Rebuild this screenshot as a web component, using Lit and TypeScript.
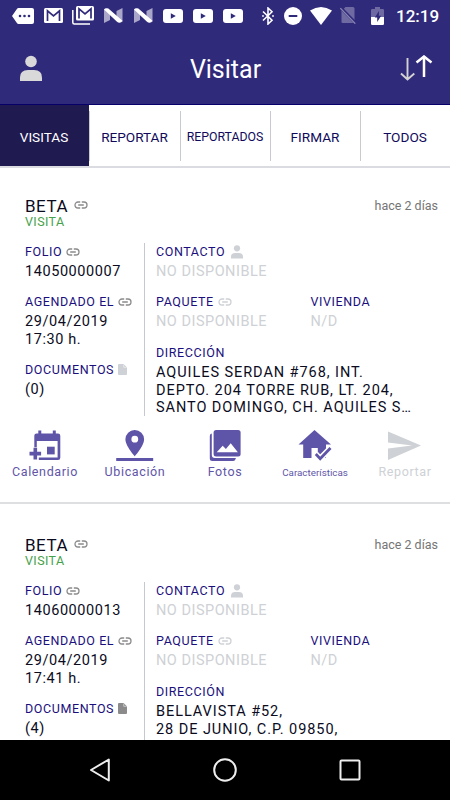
import { LitElement, html, css, nothing } from "lit";
import { customElement, property } from "lit/decorators.js";

const linkIcon = html`<svg class="link" viewBox="0 0 14 8" width="14" height="8">
  <path d="M6.2 1H4a3 3 0 0 0 0 6h2.2M7.8 1H10a3 3 0 0 1 0 6H7.8M4.2 4h5.6" fill="none" stroke="currentColor" stroke-width="1.3"/>
</svg>`;
const personIcon = html`<svg class="person" viewBox="0 0 12 14" width="12" height="14">
  <circle cx="6" cy="3.3" r="3.1" fill="currentColor"/>
  <path d="M0 13.6v-2.2C0 9 2 7.9 4 7.9h4c2 0 4 1.1 4 3.5v2.2z" fill="currentColor"/>
</svg>`;
const docIcon = html`<svg class="doc" viewBox="0 0 9 11" width="9" height="11">
  <path d="M1 0h4.6L9 3.4V10a1 1 0 0 1-1 1H1a1 1 0 0 1-1-1V1a1 1 0 0 1 1-1z" fill="currentColor"/>
  <path d="M5.7.6v2.7h2.7" fill="none" stroke="#fff" stroke-width=".5"/>
</svg>`;

const statusIcons = {
  more: html`<svg width="22" height="16" viewBox="0 0 22 16"><path d="M6.500 0H20a2 2 0 0 1 2 2v12a2 2 0 0 1-2 2H6.500q-1 0-1.600-.9L0 8 4.900.9Q5.500 0 6.500 0z" fill="#fff"/><g fill="#302a7a"><circle cx="8" cy="8" r="1.300"/><circle cx="12.500" cy="8" r="1.300"/><circle cx="17" cy="8" r="1.300"/></g></svg>`,
  mail: html`<svg width="19" height="15" viewBox="0 0 19 15"><rect width="19" height="15" rx="1.500" fill="#fff"/><path d="M3.500 13V2.800l6 5.200 6-5.200V13" fill="none" stroke="#302a7a" stroke-width="1.700"/></svg>`,
  mails: html`<svg width="22" height="19" viewBox="0 0 22 19"><path d="M.8 4v12.500q0 1.500 1.500 1.500H18" fill="none" stroke="#fff" stroke-width="1.500"/><rect x="4" y="0" width="18" height="14.500" rx="1.500" fill="#fff"/><path d="M7 12.500V2.800l6 5 6-5v9.700" fill="none" stroke="#302a7a" stroke-width="1.700"/></svg>`,
  n: html`<svg width="19" height="15" viewBox="0 0 19 15"><path d="M0 1v14l6-3V5zM18.500 0v14L12.500 10V3z" fill="#a9a6ca"/><path d="M0 1.600Q1-.2 3 .2 4.500.3 5.500 1.400L18.500 12.800Q17.500 14.900 15.500 14.800 14 14.800 13 13.700z" fill="#fff"/></svg>`,
  tube: html`<svg width="20" height="14" viewBox="0 0 20 14"><rect width="20" height="14" rx="3" fill="#fff"/><path d="M7.800 4.200v5.600L12.800 7z" fill="#302a7a"/></svg>`,
};
const systemIcons = {
  bt: html`<svg width="12" height="18" viewBox="0 0 12 18"><path d="M1 4.500l9 8.800-4 3.700V1l4 3.700-9 8.800" fill="none" stroke="#fff" stroke-width="1.600"/><circle cx="1" cy="9" r=".9" fill="#fff"/><circle cx="11" cy="9" r=".9" fill="#fff"/></svg>`,
  dnd: html`<svg width="18" height="18" viewBox="0 0 18 18"><circle cx="9" cy="9" r="9" fill="#fff"/><path d="M4.700 9h8.600" stroke="#302a7a" stroke-width="2"/></svg>`,
  wifi: html`<svg width="22" height="18" viewBox="0 0 22 18"><path d="M0 3.600Q11-3.600 22 3.600L11 18z" fill="#fff"/></svg>`,
  sim: html`<svg width="16" height="17" viewBox="0 0 16 17"><path d="M5.500 0H13a1.500 1.500 0 0 1 1.500 1.500V16H2.500a1 1 0 0 1-1-1V4.200z" fill="#6f6aa2"/><path d="M0 0l16 16.500" stroke="#302a7a" stroke-width="3"/><path d="M.3 1.200l15 15.500" stroke="#8985b3" stroke-width="1.300"/></svg>`,
  battery: html`<svg width="13" height="18" viewBox="0 0 13 18"><path d="M1.200 2H4V0h5v2h2.800Q13 2 13 3.200V10H0V3.200Q0 2 1.200 2z" fill="#6f6aa2"/><path d="M0 10h13v6.800q0 1.200-1.200 1.200H1.200Q0 18 0 16.800z" fill="#fff"/><path d="M8 4 3.800 10.500h2.400V15l4-6.300H7.800z" fill="#302a7a"/></svg>`,
};

const actionIcons: Record<string, unknown> = {
  calendar: html`<svg width="38" height="32" viewBox="26 430 38 32">
    <path d="M38.300 430.500h3v3h11.500v-3h3v3h2.200q2.300 0 2.300 2.300v21.900q0 2.300-2.300 2.300H38.800v-2.600h18.800v-16.400H36.800v6.300h-2.500v-11.500q0-2.300 2.300-2.300h1.700z" fill="#5f55a8"/>
    <rect x="47" y="446.700" width="7.700" height="7.700" fill="#5f55a8"/>
    <path d="M33.500 447.800h3.600v4h4v3.600h-4v4h-3.600v-4h-4v-3.600h4z" fill="#5f55a8"/></svg>`,
  pin: html`<svg width="38" height="32" viewBox="116 430 38 32">
    <path d="M134.800 430a9.300 9.300 0 0 0-9.400 9.300c0 6.700 9.400 17 9.400 17s9.300-10.300 9.300-17a9.300 9.300 0 0 0-9.300-9.300zm0 5.800a3.400 3.400 0 1 1 0 6.800 3.400 3.400 0 0 1 0-6.800zM116.200 458h37v3h-37z" fill="#5f55a8"/></svg>`,
  photos: html`<svg width="38" height="32" viewBox="206 430 38 32">
    <path d="M211.800 433.500q-2 .3-2 2.500v22.500q0 2.500 2.500 2.500h21q1.700 0 2.200-1.700l.4-1.300h-21q-3.100 0-3.100-3z" fill="#5f55a8"/>
    <rect x="213.600" y="430" width="27" height="26.500" rx="2.500" fill="#5f55a8"/>
    <path d="M216.700 452.300l6-6.600 3.200 3.400 4.800-5.800 7.200 9z" fill="#fff"/></svg>`,
  home: html`<svg width="38" height="32" viewBox="296 430 38 32">
    <path d="M314.500 430 298.500 444.500h4.700V458h8.300v-10h6.300v10h8.200v-13.500h5z" fill="#5f55a8"/>
    <path d="M315.800 454l4.400 4.700 10.300-10.700" fill="none" stroke="#fff" stroke-width="6"/>
    <path d="M315.800 454l4.400 4.700 10.300-10.700" fill="none" stroke="#5f55a8" stroke-width="2.800"/></svg>`,
  send: html`<svg width="38" height="32" viewBox="386 430 38 32">
    <path d="M388 431.500v11l24 3-24 3V460l33-14.500z" fill="#ced1d5"/></svg>`,
};

interface Visit {
  folio: string;
  time: string;
  docs: number;
  address: string[];
}

const visits: Visit[] = [
  { folio: "14050000007", time: "17:30 h.", docs: 0, address: ["AQUILES SERDAN #768, INT.", "DEPTO. 204 TORRE RUB, LT. 204,", "SANTO DOMINGO, CH. AQUILES S…"] },
  { folio: "14060000013", time: "17:41 h.", docs: 4, address: ["BELLAVISTA #52,", "28 DE JUNIO, C.P. 09850,", "IZTAPALAPA, DISTRITO FEDERAL"] },
];

const actions = [
  { label: "Calendario", icon: "calendar" },
  { label: "Ubicación", icon: "pin" },
  { label: "Fotos", icon: "photos" },
  { label: "Características", icon: "home", cls: "small" },
  { label: "Reportar", icon: "send", cls: "off" },
];

@customElement("status-bar")
export class StatusBar extends LitElement {
  static styles = css`
    :host { display: flex; height: 31px; align-items: center; color: #fff; padding-left: 8px; }
    svg { display: block; flex: none; }
    .slot { width: 30px; height: 30px; display: grid; place-items: center; }
    .system { display: grid; grid-template-columns: 26px 24px 32px 22px 37px; place-items: center; margin-left: 7px; height: 30px; }
    .time { font: 500 17px/30px Roboto, sans-serif; white-space: nowrap; }
  `;
  render() {
    const s = statusIcons;
    return html`${[s.more, s.mail, s.mails, s.n, s.n, s.tube, s.tube, s.tube].map((i) => html`<span class="slot">${i}</span>`)}
      <div class="system">${Object.values(systemIcons)}</div>
      <span class="time">12:19</span>`;
  }
}

@customElement("visit-card")
export class VisitCard extends LitElement {
  @property({ attribute: false }) visit!: Visit;
  static styles = css`
    :host { display: block; flex: none; border-bottom: 2px solid #dedfe1; box-sizing: border-box; height: 336px; padding-top: 28px; }
    svg { display: block; flex: none; }
    .head { display: flex; justify-content: space-between; padding: 0 12px 0 25px; height: 47px; }
    .name { display: flex; align-items: center; gap: 6px; font-size: 17px; line-height: 20px; height: 20px; letter-spacing: .5px; color: #0b0b1e; }
    .name svg { margin-top: -2px; }
    .kind { font-size: 12.500px; line-height: 12px; letter-spacing: .4px; color: #46a24a; }
    .ago { font-size: 12.500px; line-height: 19px; color: #757575; }
    .body { display: flex; height: 173.400px; }
    .left { width: 118.500px; padding-left: 25px; border-right: 1px solid #c5c8d0; display: flex; flex-direction: column; gap: 12.700px; }
    .right { padding-left: 11.500px; display: grid; grid-template-columns: 154.500px 120px; align-content: start; row-gap: 12.700px; }
    .wide { grid-column: 1 / 3; }
    .label { display: flex; align-items: center; gap: 4px; height: 20px; padding-bottom: 3px; box-sizing: border-box; font-size: 12.500px; line-height: 17px; letter-spacing: .6px; color: #1b0f7d; white-space: nowrap; }
    .label .person { margin-left: 1.500px; }
    .value { font-size: 14.500px; line-height: 17.500px; letter-spacing: .57px; color: #0b0b1e; white-space: nowrap; }
    .address { padding-top: .8px; }
    .address .value { letter-spacing: .94px; }
    .none .value { color: #ced1d5; letter-spacing: .5px; }
    .link, .doc { color: #8b8b8b; }
    .person, .pale svg { color: #ced1d5; }
    .actions { display: grid; grid-template-columns: repeat(5, 90px); padding-top: 13.600px; }
    .action { display: flex; flex-direction: column; align-items: center; color: #5f55a8; font-size: 12.500px; line-height: 20px; letter-spacing: .63px; }
    .small { font-size: 9.800px; letter-spacing: 0; line-height: 22px; }
    .off { color: #ced1d5; }
  `;
  private field(label: string, icon: unknown, lines: string[], cls = "") {
    return html`<div class=${cls}>
      <div class="label">${label}${icon}</div>
      ${lines.map((l) => html`<div class="value">${l}</div>`)}
    </div>`;
  }
  render() {
    const v = this.visit;
    return html`
      <div class="head">
        <div><div class="name">BETA${linkIcon}</div><div class="kind">VISITA</div></div>
        <div class="ago">hace 2 días</div>
      </div>
      <div class="body">
        <div class="left">
          ${this.field("FOLIO", linkIcon, [v.folio])}
          ${this.field("AGENDADO EL", linkIcon, ["29/04/2019", v.time])}
          ${this.field("DOCUMENTOS", docIcon, [`(${v.docs})`], v.docs === 0 ? "pale" : "")}
        </div>
        <div class="right">
          ${this.field("CONTACTO", personIcon, ["NO DISPONIBLE"], "none wide")}
          ${this.field("PAQUETE", linkIcon, ["NO DISPONIBLE"], "none pale")}
          ${this.field("VIVIENDA", nothing, ["N/D"], "none")}
          ${this.field("DIRECCIÓN", nothing, v.address, "address wide")}
        </div>
      </div>
      <div class="actions">
        ${actions.map((a) => html`<div class="action ${a.cls ?? ""}">${actionIcons[a.icon]}<span>${a.label}</span></div>`)}
      </div>`;
  }
}

@customElement("app-root")
export class AppRoot extends LitElement {
  static styles = css`
    :host { display: flex; flex-direction: column; width: 450px; height: 800px; overflow: hidden; background: #fff; font-family: Roboto, sans-serif; }
    svg { display: block; }
    .top { background: #302a7a; height: 105px; box-sizing: border-box; border-bottom: 1px solid #07006a; flex: none; }
    .bar { display: grid; grid-template-columns: 1fr auto 1fr; align-items: center; height: 75px; padding: 0 17px 0 18px; }
    .bar svg:last-child { justify-self: end; }
    .title { font-size: 25px; line-height: 30px; padding-top: 2px; color: #fff; }
    .tabs { display: grid; grid-template-columns: 89px 91px 90px 90px 90px; height: 61px; border-bottom: 2px solid #dadce1; flex: none; }
    .tab { display: flex; align-items: center; justify-content: center; font-size: 13.600px; color: #110a5c; height: 61px; box-sizing: border-box; }
    .tab span { flex: 1; text-align: center; line-height: 48px; height: 50px; box-sizing: border-box; padding: 2px 1px 0 0; border-left: 1px solid #c8cad0; }
    .active { background: #1f1a50; color: #fff; }
    .active span { border: 0; }
    .narrow { font-size: 12.300px; }
    .list { flex: 1; overflow: hidden; display: flex; flex-direction: column; gap: 3px; min-height: 0; }
    .nav { height: 60px; background: #000; flex: none; display: grid; grid-template-columns: repeat(3, 125px); justify-content: center; place-items: center; }
  `;
  render() {
    return html`
      <div class="top">
        <status-bar></status-bar>
        <div class="bar">
          <svg width="24" height="27" viewBox="18 54 24 27"><circle cx="31" cy="60.500" r="5.800" fill="#d9d9d9"/><path d="M20 80v-3.500Q20 69 28 69h6q8 0 8 7.500V80z" fill="#d9d9d9"/></svg>
          <span class="title">Visitar</span>
          <svg width="33" height="27" viewBox="400 54 33 27" fill="none"><path d="M407.500 57v21.500M401 72.500l6.500 6 6.800-6" stroke="#d3d3d3" stroke-width="1.900"/><path d="M424 76V56.500M416.500 61.500l7.500-6 7.500 6" stroke="#fff" stroke-width="2.500"/></svg>
        </div>
      </div>
      <div class="tabs">
        <div class="tab active"><span>VISITAS</span></div>
        <div class="tab"><span>REPORTAR</span></div>
        <div class="tab narrow"><span>REPORTADOS</span></div>
        <div class="tab"><span>FIRMAR</span></div>
        <div class="tab"><span>TODOS</span></div>
      </div>
      <div class="list">${visits.map((v) => html`<visit-card .visit=${v}></visit-card>`)}</div>
      <div class="nav">
        <svg width="22" height="26" viewBox="0 0 22 26"><path d="M19.800 2.500v21L2 13z" fill="none" stroke="#eee" stroke-width="2" stroke-linejoin="round"/></svg>
        <svg width="26" height="26" viewBox="0 0 26 26"><circle cx="13" cy="13" r="10.800" fill="none" stroke="#eee" stroke-width="2"/></svg>
        <svg width="22" height="22" viewBox="0 0 22 22"><rect x="1.500" y="1.500" width="19" height="19" rx="1" fill="none" stroke="#eee" stroke-width="2"/></svg>
      </div>`;
  }
}
